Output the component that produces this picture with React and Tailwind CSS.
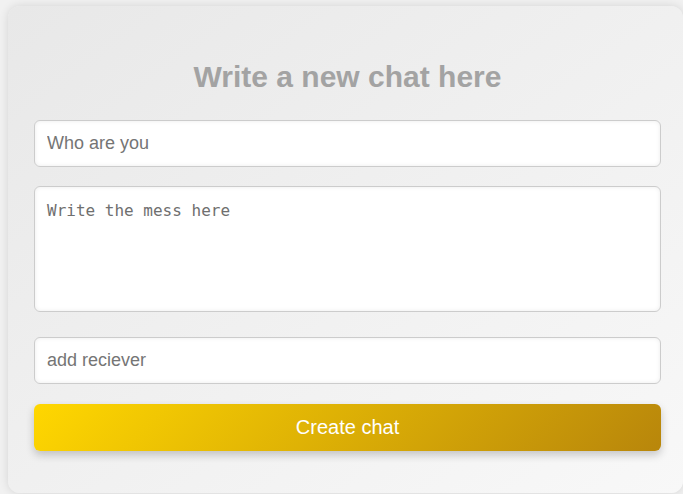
export default function App() {
  return (
    <div className="w-[683px] h-[494px] overflow-hidden bg-[#f1f1f1] pt-[6px] pl-[8px]" style={{ fontFamily: '"Liberation Sans", Arial, sans-serif' }}>
      <div className="w-[675px] h-[487px] rounded-[12px] bg-gradient-to-br from-[#e8e8e8] to-[#f8f8f8] shadow-[0_0_10px_rgba(0,0,0,0.12)] pt-[54px] pl-[26px] pr-[22px] flex flex-col">
        <h2 className="text-[30px] leading-[34px] font-bold text-[#a3a3a3] text-center m-0">Write a new chat here</h2>
        <input
          className="mt-[26px] h-[47px] w-full rounded-[6px] border border-[#cccccc] bg-white px-[12px] text-[18px] text-[#333] placeholder:text-[#757575] shadow-[inset_0_0_4px_rgba(0,0,0,0.08)] outline-none"
          placeholder="Who are you"
        />
        <textarea
          className="mt-[19px] h-[126px] w-full resize-none rounded-[6px] border border-[#cccccc] bg-white px-[12px] pt-[12px] text-[16px] leading-[24px] text-[#333] placeholder:text-[#6f6f6f] shadow-[inset_0_0_4px_rgba(0,0,0,0.08)] outline-none"
          style={{ fontFamily: '"DejaVu Sans Mono", monospace' }}
          placeholder="Write the mess here"
        />
        <input
          className="mt-[25px] h-[47px] w-full rounded-[6px] border border-[#cccccc] bg-white px-[12px] text-[18px] text-[#333] placeholder:text-[#757575] shadow-[inset_0_0_4px_rgba(0,0,0,0.08)] outline-none"
          placeholder="add reciever"
        />
        <button className="mt-[20px] h-[47px] w-full rounded-[6px] bg-[linear-gradient(135deg,#ffd700,#b8860b)] text-white text-[20px] leading-[24px] pb-[2px] shadow-[0_4px_8px_rgba(0,0,0,0.2)]">
          Create chat
        </button>
      </div>
    </div>
  );
}
